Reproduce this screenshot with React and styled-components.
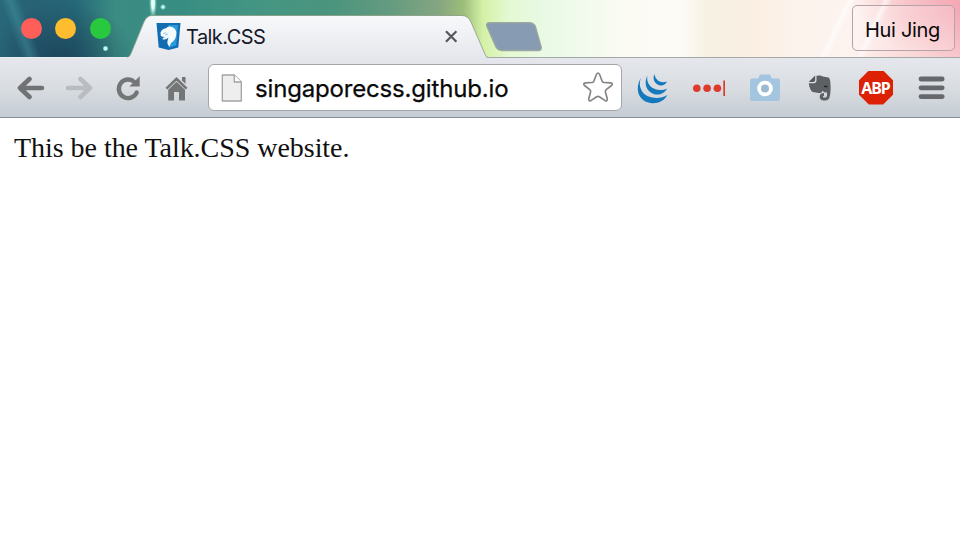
import React from 'react';
import styled, { createGlobalStyle } from 'styled-components';

const GlobalStyle = createGlobalStyle`
  body { margin: 0; background: #fff; overflow: hidden; }
  * { box-sizing: border-box; }
`;

const Window = styled.div`
  width: 960px;
  height: 547px;
  display: flex;
  flex-direction: column;
  background: #fff;
`;

const TabStrip = styled.header`
  height: 58px;
  flex: none;
  display: flex;
  align-items: flex-start;
  background:
    linear-gradient(90deg, #e9eef0 0 130px, #a3a9a6 130px) 0 57px / 100% 1px no-repeat,
    radial-gradient(circle at 105.5px 48.5px, #b9fff4 0 1.5px, transparent 3px),
    radial-gradient(circle at 163px 7px, #b9fff4 0 1px, transparent 3px),
    radial-gradient(ellipse 4px 17px at 153px 3px, #e8fffa 0 35%, rgba(160, 235, 220, 0.5) 65%, transparent),
    linear-gradient(115deg, transparent 799px, rgba(255, 255, 255, 0.6) 803px, transparent 809px),
    linear-gradient(115deg, transparent 766px, rgba(255, 255, 255, 0.6) 770px, transparent 776px),
    radial-gradient(ellipse 110px 55px at 970px 6px, rgba(242, 150, 166, 0.7), transparent),
    linear-gradient(70deg, transparent 20px, rgba(80, 170, 175, 0.35) 29px, transparent 39px),
    radial-gradient(ellipse 75px 60px at 62px 62px, rgba(25, 58, 83, 0.75), transparent),
    linear-gradient(90deg, #28687a 0, #286174 35px, #256877 75px, #3b8c83 115px, #388d83 180px, #449683 260px, #4b947e 330px, #649b80 390px, #86a681 440px, #9cbd79 463px, #d4f1a6 483px, #e4f9d4 510px, #eaf9e7 550px, #fafbf3 620px, #fdfbf7 680px, #f6f1e2 707px, #fbefe2 755px, #fcf3ed 800px, #fdf3ef 850px, #fbdcdb 900px, #f8c8cd 960px);
`;

const Lights = styled.div`
  width: 127px;
  padding: 17.5px 0 0 20.5px;
  display: flex;
  gap: 13.7px;
`;

const Light = styled.span`
  width: 21px;
  height: 21px;
  border-radius: 50%;
  background: ${({ $color }) => $color};
`;

const Tab = styled.div`
  position: relative;
  width: 361px;
  height: 58px;
  padding: 15px 29px 0 29px;
  display: flex;
  align-items: center;
`;

const TabShape = styled.svg`
  position: absolute;
  inset: 0;
`;

const Favicon = styled.svg`
  position: relative;
  flex: none;
  margin-bottom: 1px;
`;

const TabTitle = styled.span`
  position: relative;
  flex: 1;
  padding-left: 5px;
  font: 20px/24px Inter, sans-serif;
  letter-spacing: -0.55px;
  color: #17182a;
`;

const TabClose = styled.svg`
  position: relative;
  flex: none;
`;

const NewTab = styled.svg`
  flex: none;
  margin: 21px 0 0 -3px;
`;

const Profile = styled.div`
  width: 103px;
  height: 46px;
  margin: 4.5px 5.5px 0 auto;
  border: 1px solid #b5a3a6;
  border-radius: 5px;
  background: rgba(255, 255, 255, 0.2);
  display: flex;
  align-items: center;
  justify-content: center;
  padding: 4px 1px 0 0;
  font: 20px/24px Inter, sans-serif;
  letter-spacing: -0.3px;
  color: #0b0809;
`;

const Toolbar = styled.nav`
  height: 60px;
  flex: none;
  display: flex;
  align-items: center;
  background: linear-gradient(#e5e7ec, #d9dde2 50%, #c5ccd3);
  border-bottom: 1px solid #858f9c;
`;

const IconSlot = styled.span`
  width: ${({ $width }) => $width}px;
  height: 60px;
  flex: none;
  display: flex;
  align-items: center;
  justify-content: center;
`;

const Nav = styled.div`
  width: 208px;
  display: flex;
  padding-left: 6px;
`;

const AddressBar = styled.div`
  width: 414px;
  height: 47px;
  flex: none;
  border: 1px solid #a4a6a9;
  border-radius: 6px;
  background: #fff;
  display: flex;
  align-items: center;
  padding: 0 7px 0 12px;
`;

const Address = styled.span`
  flex: 1;
  padding: 2px 0 0 12px;
  font: 24px/30px Inter, sans-serif;
  letter-spacing: -0.17px;
  color: #090909;
  -webkit-text-stroke: 0.25px #090909;
`;

const Extensions = styled.div`
  display: flex;
  padding-left: 3px;
`;

const Page = styled.main`
  flex: 1;
  padding: 13px 14px;
  font: 28px/34px 'Liberation Serif', serif;
  letter-spacing: -0.04px;
  color: #101010;
`;

const lights = ['#ff5f58', '#febd2e', '#28c83f'];

function ArrowIcon({ color, right }) {
  return (
    <svg width="28" height="26" viewBox="0 0 28 26" fill="none" stroke={color} strokeWidth="4.600" strokeLinecap="round" strokeLinejoin="round">
      <path d={right ? 'M3 13H24M15.500 4L25 13L15.500 22' : 'M25 13H4M12.500 4L3 13L12.500 22'} />
    </svg>
  );
}

function ReloadIcon() {
  return (
    <svg width="28" height="28" viewBox="0 0 28 28">
      <path d="M20.500 8A9.300 9.300 0 1 0 22.700 18.500" fill="none" stroke="#747577" strokeWidth="4.400" strokeLinecap="round" />
      <path d="M25.700 2.300V12.600H15.400Z" fill="#747577" />
    </svg>
  );
}

function HomeIcon() {
  return (
    <svg width="24" height="26" viewBox="0 0 24 26" fill="#747577">
      <path d="M17 2H20.500V9L17 5.600Z" />
      <path d="M11.500 2L22.500 12.800L20.700 14.400L11.500 5.800L2.300 14.400L.5 12.800Z" />
      <path d="M11.500 6.800L20 14.700V25.500H14V17H9V25.500H3.200V14.700Z" />
    </svg>
  );
}

function PageIcon() {
  return (
    <svg width="22" height="28" viewBox="0 0 22 28" stroke="#a2a2a2" strokeWidth="1.300" strokeLinejoin="round">
      <path d="M1.300 1H13.300L20.300 8V27H1.300Z" fill="#eee" />
      <path d="M13.300 1V8H20.300" fill="#fff" />
    </svg>
  );
}

function StarIcon() {
  return (
    <svg width="32" height="34" viewBox="0 0 32 34" fill="#fff" stroke="#858585" strokeWidth="1.700" strokeLinejoin="round">
      <path d="M14.500 3.300Q16 .7 17.500 3.300L20.200 10.300Q20.700 11.400 22 11.500L28.500 11.900Q31.500 12.400 29.500 14.500L24.200 18.700Q23 19.700 23.400 21L25.200 27.500Q25.700 30.800 22.900 29.400L17.300 25.700Q16 25 14.700 25.700L9.100 29.400Q6.300 30.800 6.800 27.500L8.600 21Q9 19.700 7.800 18.700L2.500 14.500Q.5 12.400 3.500 11.900L10 11.500Q11.300 11.400 11.800 10.300Z" />
    </svg>
  );
}

function JQueryIcon() {
  return (
    <svg width="34" height="32" viewBox="0 0 34 32" fill="#1479bd">
      <path d="M5 6C-1 15 1 29 14.500 31C22 32 28 29 31.500 23C24 27.500 12 27 6.500 20C3.200 15 3.200 10.500 5 6Z" />
      <path d="M11.500 3.500C7.500 10.500 10 20 18.500 22.200C24 23.600 28.500 21 31.200 16.500C25 19.500 17.500 18 13.700 13.500C11.200 10.300 10.700 7 11.500 3.500Z" />
      <path d="M18.500 2C16.200 7 18.500 12 24 13.500C27 14.100 29.500 12.500 31 9.500C27 11.100 23.500 10.200 21 7.500C19.400 5.800 18.600 4 18.500 2Z" />
    </svg>
  );
}

function PasswordIcon() {
  return (
    <svg width="36" height="20" viewBox="0 0 36 20" fill="#df3b2d">
      <circle cx="5.800" cy="10.300" r="3.800" />
      <circle cx="16.100" cy="10.300" r="3.800" />
      <circle cx="26.400" cy="10.300" r="3.800" />
      <path d="M32.300 2.500H34V18H32.300Z" />
    </svg>
  );
}

function CameraIcon() {
  return (
    <svg width="32" height="30" viewBox="0 0 32 30">
      <path d="M3 5.500H8Q10.200 5 10.500 2.500Q10.800 1.500 12 1.500H20Q21.200 1.500 21.500 2.500Q21.800 5 24 5.500H29Q31 5.500 31 7.500V26Q31 28 29 28H3Q1 28 1 26V7.500Q1 5.500 3 5.500Z" fill="#a4c5df" />
      <circle cx="16" cy="15.500" r="5.900" fill="#9bbad2" stroke="#fff" strokeWidth="3.800" />
    </svg>
  );
}

function ElephantIcon() {
  return (
    <svg width="24" height="28" viewBox="0 0 24 28">
      <path d="M7.200 1.500V6Q7.200 8 5 8H.7Z" fill="#55585a" />
      <path d="M8.500 1.700Q13 .8 14.700 2.600L20.500 3.500Q22 4 22.400 9C22.900 15 22.500 21 21.300 24Q20 26.600 16 26.600Q11.700 26.600 11.700 22.600Q11.700 19 16 19V21.800Q14.200 22 15.300 23.500H18Q19.500 22.300 19 18.500Q16 19 14.500 16.400Q14 19.500 10.500 19L5 18Q2 17.300 .7 9.300H6Q8.500 9 8.500 6Z" fill="#5e6163" />
      <path d="M16 12.800Q17.800 10.700 19.500 13Q17.800 12.400 16 12.800Z" fill="#181a1b" stroke="#181a1b" strokeWidth=".6" />
    </svg>
  );
}

const Octagon = styled.span`
  width: 34px;
  height: 34px;
  flex: none;
  display: flex;
  align-items: center;
  justify-content: center;
  clip-path: polygon(29% 0, 71% 0, 100% 29%, 100% 71%, 71% 100%, 29% 100%, 0 71%, 0 29%);
  background: #dc2104;
  color: #fff;
  font: bold 16px/18px 'Noto Sans', sans-serif;
  letter-spacing: -1.1px;
  padding-right: 1px;
`;

function MenuIcon() {
  return (
    <svg width="28" height="26" viewBox="0 0 28 26" stroke="#66686b" strokeWidth="4.800" strokeLinecap="round">
      <path d="M3 4H24.200M3 12.800H24.200M3 21.600H24.200" />
    </svg>
  );
}

export default function App() {
  return (
    <Window>
      <GlobalStyle />
      <TabStrip>
        <Lights>
          {lights.map((color) => <Light key={color} $color={color} />)}
        </Lights>
        <Tab>
          <TabShape width="361" height="58" viewBox="0 0 361 58">
            <defs>
              <linearGradient id="tabFill" x1="0" y1="15" x2="0" y2="58" gradientUnits="userSpaceOnUse">
                <stop stopColor="#f8f9fb" />
                <stop offset="1" stopColor="#e5e7ec" />
              </linearGradient>
            </defs>
            <path d="M0 58Q3 57 5 51L17 22Q20 15.500 25 15.500H341Q347 15.500 350 22L364 53Q366 58 367 58Z" fill="url(#tabFill)" transform="scale(.983 1)" />
            <path d="M0 57.500Q3 57 5 51L17 22Q20 15.500 25 15.500H335Q341 15.500 344 22L357.500 53Q359 57.500 361 57.500" fill="none" stroke="#80947a" strokeWidth="1" opacity=".75" />
          </TabShape>
          <Favicon width="25" height="29" viewBox="0 0 25 29">
            <path d="M.5 1H24.500L22.300 25.500L12.500 28L2.700 25.500Z" fill="#126cb2" />
            <path d="M12.500 3H22L20.200 23.500L12.500 25.700Z" fill="#299bdb" />
            <path d="M4.500 10.500Q6 6.500 10 6.200Q12 3.600 16 5Q20.500 6.500 20.300 12Q20 17 17 19.500Q14 21 14 24.500Q10.500 22.500 11.600 18.500L12.500 15.500Q10 18 6.500 17.200L7 15.700L9 15Q6.500 14.800 4.800 14Z" fill="#f4fbff" />
            <path d="M7 11.500L10.500 10.800M9 13.200L12 12.200" stroke="#79b8de" strokeWidth=".8" />
          </Favicon>
          <TabTitle>Talk.CSS</TabTitle>
          <TabClose width="15" height="15" viewBox="0 0 15 15" stroke="#55575b" strokeWidth="2.200">
            <path d="M2 2.300L12.400 12.700M12.400 2.300L2 12.700" />
          </TabClose>
        </Tab>
        <NewTab width="58" height="31" viewBox="0 0 58 31">
          <path d="M5 1.800H44Q49 1.800 50.500 6L56 25.500Q57 29.500 53 29.500H17Q12.500 29.500 10.500 25L2 5.500Q.5 1.800 5 1.800Z" fill="#879bb3" stroke="#9aa69f" strokeWidth="1.400" />
        </NewTab>
        <Profile>Hui Jing</Profile>
      </TabStrip>
      <Toolbar>
        <Nav>
          <IconSlot $width={49}><ArrowIcon color="#717274" /></IconSlot>
          <IconSlot $width={48}><ArrowIcon color="#b9bcc1" right /></IconSlot>
          <IconSlot $width={49}><ReloadIcon /></IconSlot>
          <IconSlot $width={49}><HomeIcon /></IconSlot>
        </Nav>
        <AddressBar>
          <PageIcon />
          <Address>singaporecss.github.io</Address>
          <StarIcon />
        </AddressBar>
        <Extensions>
          <IconSlot $width={56}><JQueryIcon /></IconSlot>
          <IconSlot $width={56}><PasswordIcon /></IconSlot>
          <IconSlot $width={55}><CameraIcon /></IconSlot>
          <IconSlot $width={56}><ElephantIcon /></IconSlot>
          <IconSlot $width={56}><Octagon>ABP</Octagon></IconSlot>
          <IconSlot $width={55}><MenuIcon /></IconSlot>
        </Extensions>
      </Toolbar>
      <Page>This be the Talk.CSS website.</Page>
    </Window>
  );
}
